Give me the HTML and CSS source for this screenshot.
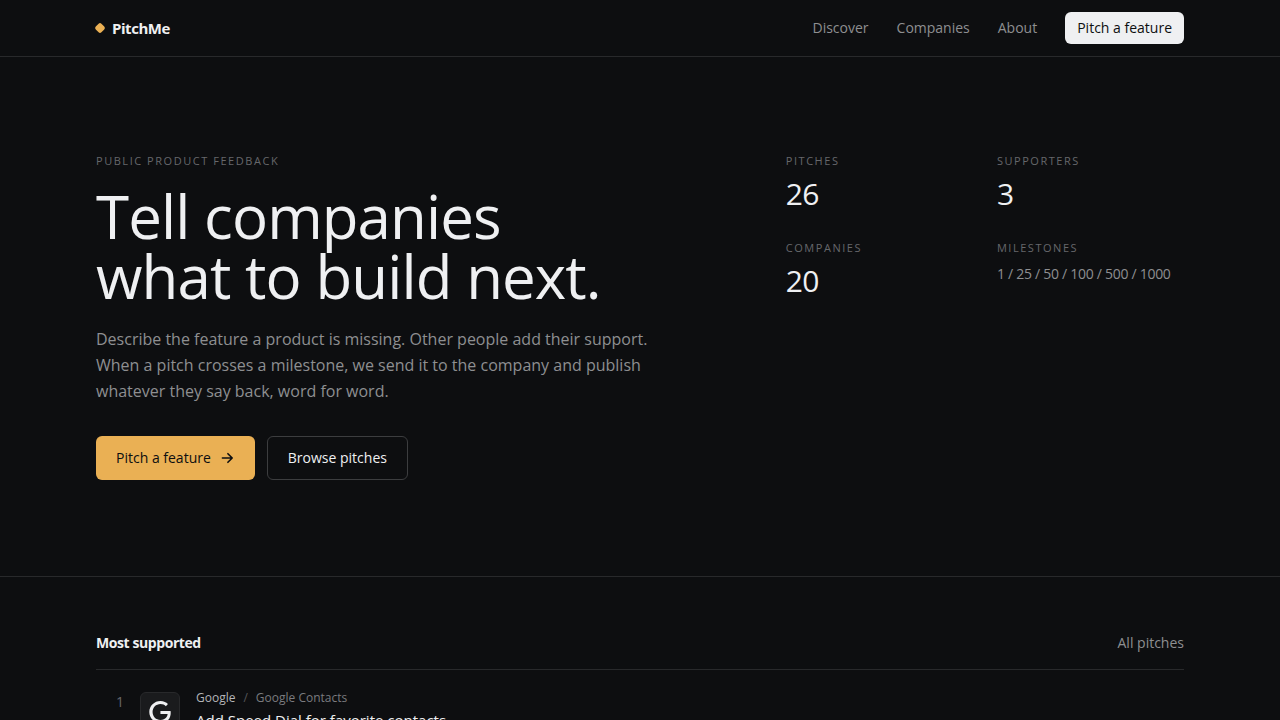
FILE: index.html
```html
<!DOCTYPE html>
<html lang="en">
	<head>
		<meta charset="utf-8">
		<meta name="viewport" content="width=device-width, initial-scale=1">
		<title>PitchMe</title>
		<link rel="stylesheet" href="styles.css">
	</head>
	<body>
		<header class="header">
			<div class="wrap header-inner">
				<a class="logo" href="#"><span class="logo-mark"></span>PitchMe</a>
				<nav class="nav">
					<a href="#">Discover</a>
					<a href="#">Companies</a>
					<a href="#">About</a>
					<button class="btn btn-light" type="button">Pitch a feature</button>
				</nav>
			</div>
		</header>
		<main>
			<section class="hero">
				<div class="wrap hero-inner">
					<div>
						<p class="label">Public product feedback</p>
						<h1>Tell companies<br>what to build next.</h1>
						<p class="lead">Describe the feature a product is missing. Other people add their support. When a pitch crosses a milestone, we send it to the company and publish whatever they say back, word for word.</p>
						<div class="actions">
							<button class="btn btn-accent" type="button">Pitch a feature
								<svg width="16" height="16" viewBox="0 0 16 16" fill="none" stroke="currentColor" stroke-width="1.6" stroke-linecap="round" stroke-linejoin="round" aria-hidden="true"><path d="M3.4 8h9.8M8.9 3.7 13.2 8l-4.3 4.3"/></svg>
							</button>
							<button class="btn btn-outline" type="button">Browse pitches</button>
						</div>
					</div>
					<dl class="stats">
						<div>
							<dt class="label">Pitches</dt>
							<dd class="num">26</dd>
						</div>
						<div>
							<dt class="label">Supporters</dt>
							<dd class="num">3</dd>
						</div>
						<div>
							<dt class="label">Companies</dt>
							<dd class="num">20</dd>
						</div>
						<div>
							<dt class="label">Milestones</dt>
							<dd class="steps">1 / 25 / 50 / 100 / 500 / 1000</dd>
						</div>
					</dl>
				</div>
			</section>
			<section class="wrap top">
				<div class="top-head">
					<h2>Most supported</h2>
					<a href="#">All pitches</a>
				</div>
				<ol class="list">
					<li class="item">
						<span class="rank">1</span>
						<span class="avatar">
							<svg width="22" height="22" viewBox="0 0 24 24" fill="#eff0f2" aria-hidden="true"><path d="M12.48 10.92v3.28h7.84c-.24 1.84-.853 3.187-1.787 4.133-1.147 1.147-2.933 2.4-6.053 2.4-4.827 0-8.6-3.893-8.6-8.72s3.773-8.72 8.6-8.72c2.6 0 4.507 1.027 5.907 2.347l2.307-2.307C18.747 1.44 16.133 0 12.48 0 5.867 0 .307 5.387.307 12s5.56 12 12.173 12c3.573 0 6.267-1.173 8.373-3.36 2.16-2.16 2.84-5.213 2.84-7.667 0-.76-.053-1.467-.173-2.053H12.48z"/></svg>
						</span>
						<div>
							<p class="meta"><span class="company">Google</span><span class="slash">/</span><span>Google Contacts</span></p>
							<h3><a href="#">Add Speed Dial for favorite contacts</a></h3>
						</div>
					</li>
				</ol>
			</section>
		</main>
	</body>
</html>
```
FILE: styles.css
```css
*{margin: 0;padding: 0;box-sizing: border-box;}
html{background: #0d0e10;}
body{
	font-family: "Open Sans", sans-serif;
	font-size: 14px;
	line-height: 20px;
	color: #eff0f2;
}
a{color: inherit;text-decoration: none;}
ol{list-style: none;}
.wrap{
	max-width: 1152px;
	margin: 0 auto;
	padding: 0 32px;
}

/* header */
.header{border-bottom: 1px solid #28292b;}
.header-inner{
	height: 56px;
	display: flex;
	align-items: center;
	justify-content: space-between;
}
.logo{display: flex;align-items: center;gap: 8px;font-size: 15px;font-weight: 700;letter-spacing: -0.03em;}
.logo-mark{width: 8px;height: 8px;border-radius: 2px;background: #eab054;transform: rotate(45deg);}
.nav{display: flex;align-items: center;gap: 28px;color: #8e8f91;}

.btn{
	display: inline-flex;
	align-items: center;
	gap: 8px;
	height: 44px;
	padding: 0 20px;
	border: 0;
	border-radius: 6px;
	font: inherit;
	cursor: pointer;
}
.btn-light{height: 32px;padding: 0 12px;color: #0d0e10;background: #eff0f2;}
.btn-accent{color: #0d0e10;background: #eab054;}
.btn-outline{color: #eff0f2;background: transparent;border: 1px solid #3c3d3f;}

/* hero */
.hero{border-bottom: 1px solid #28292b;}
.hero-inner{
	display: grid;
	grid-template-columns: 11fr 7fr;
	gap: 64px;
	padding-top: 96px;
	padding-bottom: 96px;
}
.label{
	font-size: 11px;
	line-height: 16px;
	letter-spacing: 0.14em;
	text-transform: uppercase;
	color: #66676b;
}
h1{margin-top: 17px;font-size: 60px;line-height: 60px;font-weight: 400;letter-spacing: -0.015em;}
.lead{max-width: 576px;margin-top: 20px;font-size: 16px;line-height: 26px;color: #8e8f91;}
.actions{display: flex;gap: 12px;margin-top: 32px;}
.stats{
	display: grid;
	grid-template-columns: 1fr 1fr;
	gap: 28px 24px;
	align-content: start;
}
.stats dd{letter-spacing: -0.02em;}
.num{margin-top: 7px;font-size: 30px;line-height: 36px;}
.steps{margin-top: 7px;line-height: 22px;color: #8e8f91;}

/* most supported */
.top{padding-top: 56px;}
.top-head{
	display: flex;
	justify-content: space-between;
	padding-bottom: 16px;
	border-bottom: 1px solid #28292b;
	color: #8e8f91;
}
h2{font-size: 14px;font-weight: 700;letter-spacing: -0.03em;color: #eff0f2;}
.item{
	display: grid;
	grid-template-columns: 28px 40px 1fr;
	gap: 16px;
	padding: 20px 0;
}
.rank{margin-top: 2px;text-align: right;color: #66676b;}
.avatar{
	width: 40px;
	height: 40px;
	margin-top: 2px;
	display: flex;
	align-items: center;
	justify-content: center;
	border: 1px solid #28292b;
	border-radius: 6px;
	background: #1a1b1d;
}
.meta{display: flex;gap: 8px;font-size: 12px;line-height: 16px;color: #7a7b7f;}
.company{color: #b4b5b8;}
.slash{color: #55565a;}
h3{margin-top: 4px;font-size: 15px;line-height: 20px;font-weight: 400;}
```
